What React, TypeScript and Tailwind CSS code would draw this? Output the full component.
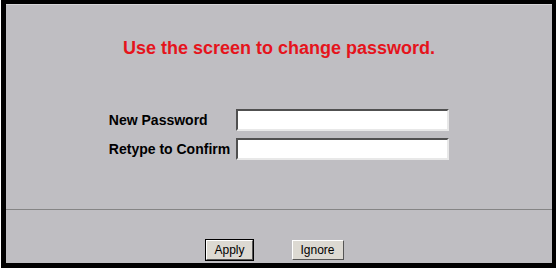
import React from "react";

function Field({ label }: { label: string }) {
  return (
    <>
      <span className="text-[14px] font-bold leading-[22px] text-black">{label}</span>
      <input
        type="password"
        className="h-[22px] w-[213px] bg-white border-2 border-t-[#505050] border-l-[#505050] border-b-[#e8e8e8] border-r-[#e8e8e8] outline-none"
      />
    </>
  );
}

function Button({ label, primary }: { label: string; primary?: boolean }) {
  return (
    <button
      className={
        "h-[20px] bg-[#dcd9d2] text-[12px] leading-none text-black border border-t-white border-l-white border-b-[#555] border-r-[#555] " +
        (primary ? "outline outline-1 outline-black px-[7px]" : "px-[8px]")
      }
    >
      {label}
    </button>
  );
}

export default function App() {
  return (
    <div className="w-[557px] h-[270px] bg-white pl-px pr-px pb-[2px] font-['Liberation_Sans',Arial,sans-serif]">
      <div className="h-full flex flex-col bg-[#bfbec2] border-black border-l-[5px] border-t-[4px] border-r-[4px] border-b-[5px]">
        <div className="h-[206px] border-t border-[#d6d5d8] border-b border-b-[#858585] flex flex-col items-center">
          <h1 className="mt-[32px] text-[18px] font-bold leading-[22px] text-[#e5141c]">
            Use the screen to change password.
          </h1>
          <div className="mt-[50px] grid grid-cols-[auto_auto] items-center gap-x-[6px] gap-y-[7px]">
            <Field label="New Password" />
            <Field label="Retype to Confirm" />
          </div>
        </div>
        <div className="flex-1 flex items-end justify-center gap-[39px] pr-[8px] pb-[3px]">
          <Button label="Apply" primary />
          <Button label="Ignore" />
        </div>
      </div>
    </div>
  );
}
